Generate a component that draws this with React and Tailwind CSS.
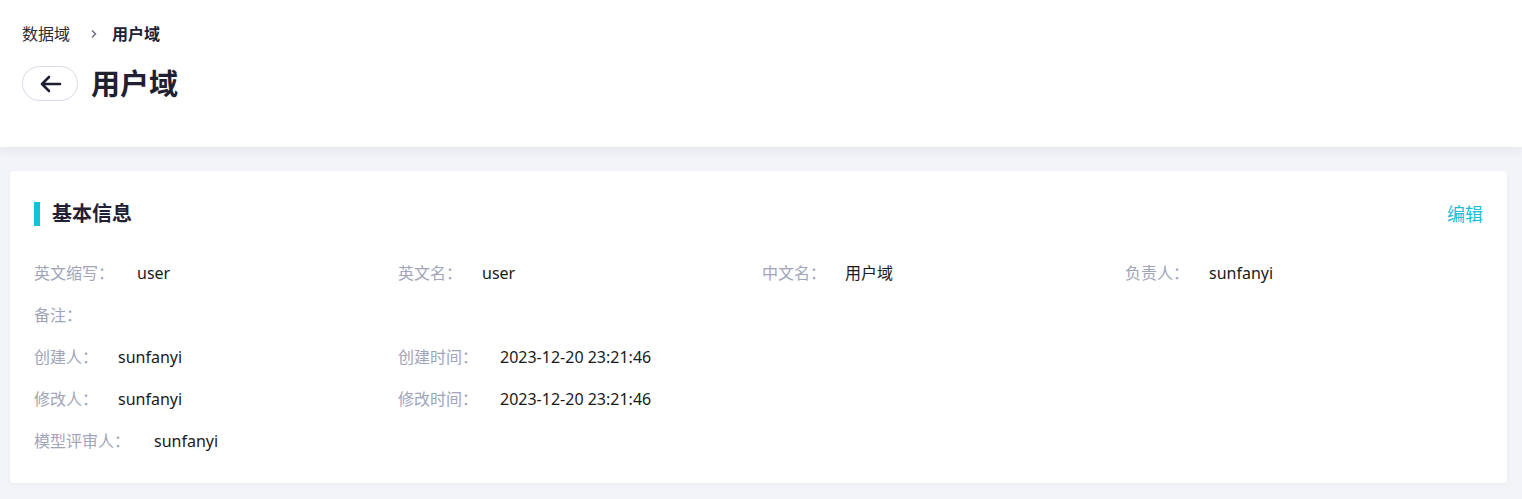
import React from "react";

const font = { fontFamily: '"Noto Sans", "Noto Sans CJK SC", sans-serif' };

function Field({ label, value, gap = "ml-[20px]" }) {
  return (
    <div className="flex items-center h-[42px] text-base">
      <span className="text-base text-[#a0a5b8] whitespace-nowrap">{label}</span>
      <span className={"text-base text-[#1a1a1a] whitespace-nowrap " + gap}>{value}</span>
    </div>
  );
}

export default function App() {
  return (
    <div className="min-h-[499px] bg-[#f3f4f7] text-base" style={font}>
      <div className="bg-white h-[147px] px-[22px] pt-[20px] shadow-[0_4px_10px_rgba(20,30,60,0.06)] relative z-10">
        <div className="flex items-center h-[28px] leading-none text-base">
          <span className="text-base text-[#2b2b33]">数据域</span>
          <svg className="ml-[20px] mr-[14px]" width="8" height="10" viewBox="0 0 8 10">
            <path d="M2 1.5 L5.5 5 L2 8.5" fill="none" stroke="#6b6f80" strokeWidth="1.5" />
          </svg>
          <span className="text-base font-bold text-[#1f2033]">用户域</span>
        </div>
        <div className="flex items-center mt-[18px]">
          <button className="w-[56px] h-[35px] rounded-full border border-[#d7dae8] flex items-center justify-center bg-white">
            <svg width="24" height="20" viewBox="0 0 24 20">
              <path d="M22 10 H4 M11 3 L4 10 L11 17" fill="none" stroke="#1f2033" strokeWidth="2.6" strokeLinecap="round" strokeLinejoin="round" />
            </svg>
          </button>
          <h1 className="ml-[13px] text-[29px] font-bold text-[#1f2033] leading-none">用户域</h1>
        </div>
      </div>
      <div className="pt-[24px] pl-[10px] pr-[15px] pb-[16px]">
        <div className="bg-white rounded-[4px] h-[312px] px-[24px] pt-[30px] shadow-[0_1px_4px_rgba(20,30,60,0.04)]">
          <div className="flex items-center justify-between h-[26px]">
            <div className="flex items-center">
              <div className="w-[6px] h-[24px] bg-[#12c2dc]" />
              <span className="ml-[12px] text-[20px] font-bold text-[#1f2033]">基本信息</span>
            </div>
            <span className="text-[18px] text-[#1cbcd9]">编辑</span>
          </div>
          <div className="mt-[25px]">
            <div className="grid grid-cols-[364px_364px_363px_1fr]">
              <Field label="英文缩写：" value="user" gap="ml-[23px]" />
              <Field label="英文名：" value="user" />
              <Field label="中文名：" value="用户域" gap="ml-[19px]" />
              <Field label="负责人：" value="sunfanyi" />
            </div>
            <Field label="备注：" value="" />
            <div className="grid grid-cols-[364px_1fr]">
              <Field label="创建人：" value="sunfanyi" />
              <Field label="创建时间：" value="2023-12-20 23:21:46" gap="ml-[22px]" />
            </div>
            <div className="grid grid-cols-[364px_1fr]">
              <Field label="修改人：" value="sunfanyi" />
              <Field label="修改时间：" value="2023-12-20 23:21:46" gap="ml-[22px]" />
            </div>
            <Field label="模型评审人：" value="sunfanyi" gap="ml-[24px]" />
          </div>
        </div>
      </div>
    </div>
  );
}
